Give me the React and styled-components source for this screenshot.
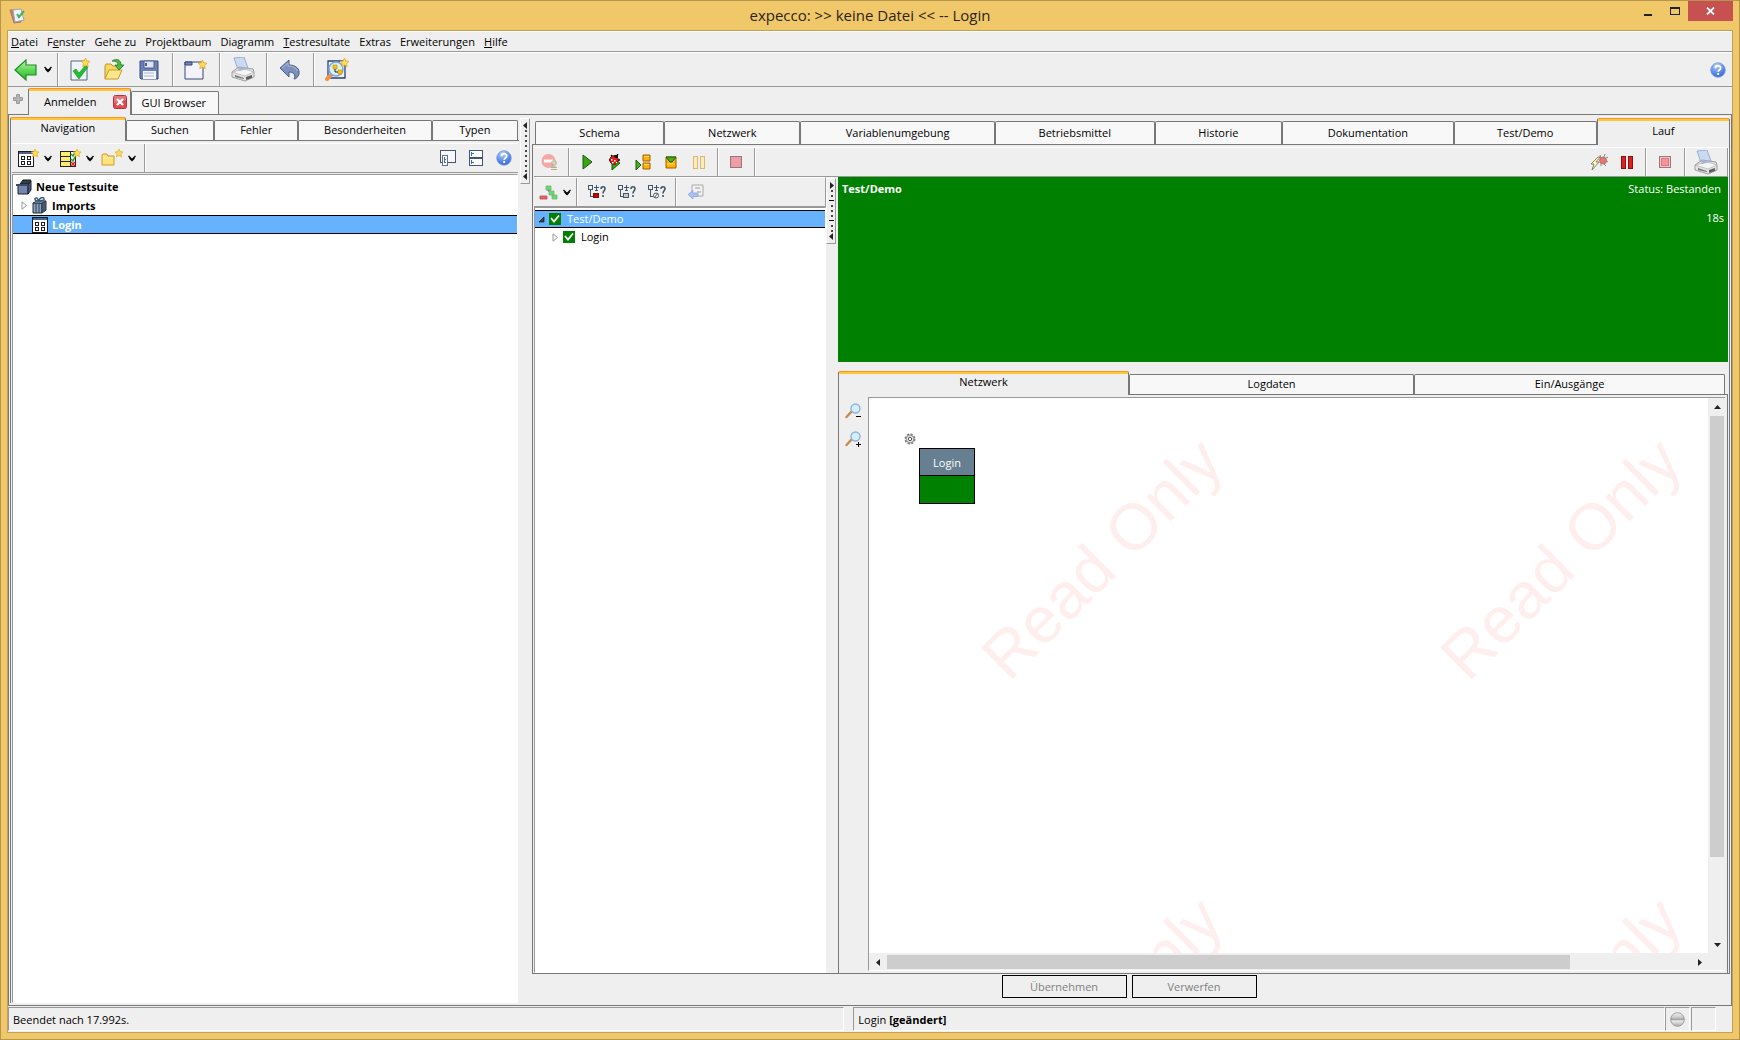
import React, { useState } from 'react';
import styled, { createGlobalStyle } from 'styled-components';

const GlobalStyle = createGlobalStyle`
  * {
    box-sizing: border-box;
  }
  body {
    margin: 0;
    color: #000;
    font-family: 'Open Sans', 'Noto Sans', sans-serif;
    font-size: 11px;
    line-height: 16px;
  }
  button {
    padding: 0;
    border: none;
    background: none;
    color: inherit;
    font: inherit;
  }
  ul {
    margin: 0;
    padding: 0;
    list-style: none;
  }
  svg {
    display: block;
    flex: none;
  }
`;

const Window = styled.div`
  display: flex;
  flex-direction: column;
  height: 100vh;
  padding: 0 6px 6px;
  border: 1px solid #b5964c;
  background: #f0c869;
`;

const TitleBar = styled.header`
  display: flex;
  align-items: center;
  height: 29px;
  flex: none;
  padding-left: 2px;
  h1 {
    flex: 1;
    margin: 0 0 2px 80px;
    font-size: 15px;
    font-weight: 400;
    line-height: 20px;
    text-align: center;
    color: #2b2417;
  }
`;

const WindowButtons = styled.div`
  display: flex;
  align-self: flex-start;
  button {
    display: flex;
    align-items: center;
    justify-content: center;
    width: 27px;
    height: 20px;
  }
  .close {
    width: 45px;
    background: #c75050;
  }
`;

const Client = styled.main`
  flex: 1;
  min-height: 0;
  display: flex;
  flex-direction: column;
  border: 1px solid #c3a057;
  background: #efefef;
`;

const MenuBar = styled.nav`
  display: flex;
  align-items: center;
  gap: 9px;
  height: 21px;
  flex: none;
  padding-left: 3px;
  border-top: 1px solid #fff;
  border-bottom: 1px solid #999;
  u {
    text-underline-offset: 1px;
  }
`;

const Toolbar = styled.div`
  display: flex;
  height: ${(p) => p.$height || 30}px;
  flex: none;
  border-top: 1px solid #fff;
  border-bottom: 1px solid #999;
`;

const ToolGroup = styled.div`
  display: flex;
  align-items: center;
  padding: 0 ${(p) => p.$pad || 3}px;
  border-right: ${(p) => (p.$last ? 'none' : '1px solid #999')};
  box-shadow: ${(p) => (p.$last ? 'none' : '1px 0 0 #fff')};
`;

const Spacer = styled.div`
  flex: 1;
`;

const ToolButton = styled.button`
  display: flex;
  align-items: center;
  justify-content: center;
  align-self: center;
  width: ${(p) => p.$width || 28}px;
  height: 26px;
`;

const TabRow = styled.div`
  display: flex;
  align-items: flex-end;
  flex: none;
  height: ${(p) => p.$height || 23}px;
  padding: ${(p) => p.$pad || '0'};
`;

const Tab = styled.button`
  position: relative;
  z-index: ${(p) => (p.$active ? 1 : 0)};
  flex: ${(p) => p.$grow || 1} 1 0;
  align-self: stretch;
  margin: ${(p) => (p.$active ? '0 0 -1px' : '3px 0 0')};
  padding-bottom: ${(p) => (p.$active ? 2 : 0) + (p.$tight ? 1 : 0)}px;
  border: 1px solid #777;
  border-bottom: none;
  border-radius: 2px 2px 0 0;
  background: #f8f8f8;
  white-space: nowrap;
  ${(p) =>
    p.$active &&
    `
    border-top-color: #ff922b;
    background: linear-gradient(#ffc636 2px, #efefef 2px);
  `}
`;

const DocTabs = styled.div`
  display: flex;
  align-items: flex-end;
  height: 27px;
  flex: none;
`;

const AddTab = styled.button`
  display: flex;
  justify-content: center;
  width: 20px;
  height: 20px;
`;

const DocTab = styled.div`
  position: relative;
  z-index: ${(p) => (p.$active ? 1 : 0)};
  display: flex;
  align-items: center;
  gap: 16px;
  height: ${(p) => (p.$active ? 27 : 23)}px;
  margin-bottom: ${(p) => (p.$active ? -1 : 0)}px;
  padding: ${(p) => (p.$active ? '0 3px 1px 15px' : '0 12px 0 10px')};
  border: 1px solid #777;
  border-bottom: none;
  border-radius: 2px 2px 0 0;
  background: #f8f8f8;
  ${(p) =>
    p.$active &&
    `
    border-top-color: #ff922b;
    background: linear-gradient(#ffc636 2px, #efefef 2px);
  `}
`;

const Workspace = styled.div`
  flex: 1;
  min-height: 0;
  display: flex;
  border: 1px solid #777;
`;

const NavPane = styled.section`
  display: flex;
  flex-direction: column;
  flex: none;
  width: 510px;
  padding: 2px 0 2px 1px;
`;

const Panel = styled.div`
  flex: 1;
  min-height: 0;
  display: flex;
  flex-direction: column;
  border: 1px solid #777;
  border-width: ${(p) => p.$edges || '1px'};
  padding: ${(p) => p.$pad || '2px 1px 0'};
`;

const Tree = styled.ul`
  flex: 1;
  margin-top: ${(p) => p.$gap || 0}px;
  padding: 2px 0;
  border: 1px solid #999;
  border-right-color: #fff;
  border-bottom-color: #fff;
  background: #fff;
  font-weight: ${(p) => (p.$bold ? 700 : 400)};
  line-height: 16px;
`;

const TreeRow = styled.li`
  display: flex;
  align-items: center;
  gap: 4px;
  height: ${(p) => p.$height}px;
  padding-left: ${(p) => p.$indent}px;
  ${(p) =>
    p.$selected &&
    `
    border-top: 1px solid #000;
    border-bottom: 1px solid #000;
    background: #66b2ff;
    color: #fff;
  `}
`;

const SplitterColumn = styled.div`
  flex: none;
  width: ${(p) => p.$width}px;
  padding: ${(p) => p.$pad};
`;

const SplitterHandle = styled.div`
  display: flex;
  flex-direction: column;
  align-items: center;
  justify-content: space-between;
  height: 66px;
  border: 1px solid #fff;
  border-right-color: #999;
  border-bottom-color: #999;
  padding: 3px 0;
`;

const RunPane = styled.section`
  flex: 1;
  min-width: 0;
  display: flex;
  flex-direction: column;
  padding: 3px 1px 0 0;
`;

const RunBody = styled.div`
  flex: 1;
  min-height: 0;
  display: flex;
`;

const TestColumn = styled.div`
  display: flex;
  flex-direction: column;
  flex: none;
  width: 292px;
  .bar {
    border-right: 1px solid #999;
  }
`;

const ResultColumn = styled.div`
  flex: 1;
  min-width: 0;
  display: flex;
  flex-direction: column;
`;

const ResultBanner = styled.div`
  display: grid;
  grid-template-columns: 1fr auto;
  align-content: start;
  row-gap: 13px;
  height: 185px;
  flex: none;
  margin-bottom: 9px;
  padding: 4px 4px 0;
  background: #008000;
  color: #fff;
  .status {
    padding-right: 3px;
  }
  .time {
    grid-column: 2;
    justify-self: end;
  }
`;

const DiagramArea = styled.div`
  flex: 1;
  min-height: 0;
  display: flex;
`;

const ZoomTools = styled.div`
  width: 29px;
  flex: none;
  button {
    height: 28px;
  }
`;

const Viewport = styled.div`
  flex: 1;
  min-width: 0;
  display: grid;
  grid-template: minmax(0, 1fr) 17px / minmax(0, 1fr) 17px;
  border-top: 1px solid #999;
  border-left: 1px solid #999;
  border-bottom: 1px solid #fff;
`;

const Canvas = styled.div`
  position: relative;
  overflow: hidden;
  background: #fff;
`;

const Watermark = styled.span`
  position: absolute;
  left: ${(p) => p.$x}px;
  top: ${(p) => p.$y}px;
  color: #ffeeee;
  font-family: 'Liberation Sans', sans-serif;
  font-size: 65px;
  line-height: 65px;
  white-space: nowrap;
  transform: rotate(-45deg);
  transform-origin: 0 55px;
`;

const StepNode = styled.div`
  position: absolute;
  left: 50px;
  top: 50px;
  width: 56px;
  border: 1px solid #000;
  background: #008000;
  .name {
    height: 27px;
    border-bottom: 1px solid #000;
    background: #668091;
    color: #fff;
    line-height: 28px;
    text-align: center;
  }
  .state {
    height: 27px;
  }
`;

const StepGear = styled.div`
  position: absolute;
  left: 35px;
  top: 35px;
`;

const ScrollBar = styled.div`
  display: flex;
  flex-direction: ${(p) => (p.$vertical ? 'column' : 'row')};
  padding: ${(p) => (p.$vertical ? '0 1px 0 2px' : '2px 0 1px')};
  button {
    display: flex;
    align-items: center;
    justify-content: center;
    flex: none;
    width: ${(p) => (p.$vertical ? 14 : 18)}px;
    height: ${(p) => (p.$vertical ? 18 : 14)}px;
  }
  .track {
    flex: 1;
  }
  .thumb {
    width: ${(p) => (p.$vertical ? '100%' : '85%')};
    height: ${(p) => (p.$vertical ? '85%' : '100%')};
    background: #cdcdcd;
  }
`;

const Actions = styled.div`
  display: flex;
  justify-content: center;
  gap: 5px;
  padding: 1px 4px 7px 0;
`;

const ActionButton = styled.button`
  width: 125px;
  height: 23px;
  border: 1px solid #000;
  &:disabled {
    color: #808080;
  }
`;

const StatusBar = styled.footer`
  display: flex;
  height: 26px;
  flex: none;
  padding: 1px 16px 1px 0;
`;

const StatusCell = styled.div`
  display: flex;
  align-items: center;
  gap: 3px;
  flex: ${(p) => p.$flex || '0 0 25px'};
  margin-right: ${(p) => p.$gap || 0}px;
  padding: 1px 4px 0;
  border: 1px solid #999;
  border-right-color: #fff;
  border-bottom-color: #fff;
`;

/* small drawings */

const Star = ({ x, y, s = 1 }) => (
  <path
    transform={`translate(${x} ${y}) scale(${s})`}
    d="M4.5 0l1.3 2.9 3.2.4-2.4 2.2.6 3.2-2.7-1.6-2.8 1.6.7-3.2L0 3.3l3.1-.4z"
    fill="#ffdc55"
    stroke="#dba520"
    strokeWidth=".7"
  />
);

const Chevron = () => (
  <svg width="8" height="7" viewBox="0 0 8 7">
    <path d="M.5 1L4 4.500 7.500 1M1.500 3L4 5.500 6.500 3" fill="none" stroke="#000" strokeWidth="1.300" />
  </svg>
);

const AppLogo = () => (
  <svg width="17" height="17" viewBox="0 0 17 17">
    <path d="M1 3l8 0 3 12-7 1z" fill="#c9806a" stroke="#a3796c" />
    <path d="M4 3l8-1 3 11-9 2z" fill="#f0f5fa" stroke="#9aa5b5" />
    <path d="M8 7l2 3 5-6" fill="none" stroke="#45b368" strokeWidth="2" />
  </svg>
);

const BackIcon = () => (
  <svg width="23" height="22" viewBox="0 0 23 22">
    <defs>
      <linearGradient id="back" x1="0" y1="0" x2="0" y2="1">
        <stop offset="0" stopColor="#c6f5b6" />
        <stop offset=".5" stopColor="#5fd957" />
        <stop offset="1" stopColor="#2fb32f" />
      </linearGradient>
    </defs>
    <path d="M1 11L12 1v5h10v10H12v5z" fill="url(#back)" stroke="#1f8a26" strokeWidth="1.2" />
  </svg>
);

const NewTestIcon = () => (
  <svg width="22" height="24" viewBox="0 0 22 24">
    <path d="M2 3h16v19H2z" fill="#eef4fa" stroke="#56697d" />
    <path d="M4 13l3-2 3 4 6-7 3 1-9 12z" fill="#1fc030" stroke="#128a1e" strokeWidth=".6" />
    <Star x={12} y={0} />
  </svg>
);

const OpenIcon = () => (
  <svg width="22" height="24" viewBox="0 0 22 24">
    <path d="M2 21V8l1-2h5l2 2h6v4" fill="#f6d765" stroke="#c09122" />
    <path d="M2 21l4-9h13l-4 9z" fill="#ffe88c" stroke="#c99a26" />
    <path d="M9 3c5-3 9-1 9 4h3l-5 5-4-5h3c0-3-2-4-6-4z" fill="#4dbb45" stroke="#227a26" strokeWidth=".8" />
  </svg>
);

const SaveIcon = () => (
  <svg width="20" height="20" viewBox="0 0 20 20">
    <path d="M1 1h18v18H2l-1-1z" fill="#6b80b4" stroke="#374a80" />
    <path d="M5 1h10v7H5z" fill="#dfe5f2" stroke="#4a5e92" />
    <path d="M6 3h2v3H6z" fill="#4a5e92" />
    <path d="M4 11h13v8H4z" fill="#f2f5fa" />
    <path d="M5 13h10M5 16h10" stroke="#aab6d2" />
  </svg>
);

const NewWindowIcon = () => (
  <svg width="24" height="22" viewBox="0 0 24 22">
    <path d="M1 3h18v17H1z" fill="#f4f2fa" stroke="#37477a" />
    <path d="M1 3h7v3H1z" fill="#7387b5" stroke="#37477a" />
    <Star x={14} y={1} />
  </svg>
);

const PrinterIcon = () => (
  <svg width="24" height="25" viewBox="0 0 24 25">
    <path d="M3 1l10-1 4 11-10 2z" fill="#cbdaf3" stroke="#8d9fc4" strokeWidth=".8" />
    <path d="M1 15l7-5 14 2 1 3v5l-9 4-13-4z" fill="#e4e4e4" stroke="#8a8a8a" strokeWidth=".8" />
    <path d="M1 15l13 4 9-4-9-3z" fill="#f6f6f6" stroke="#a5a5a5" strokeWidth=".6" />
    <path d="M4 18l9 3v1l-9-2z" fill="#777" />
    <path d="M15 20l6-2v3l-6 2z" fill="#5e5e5e" />
    <path d="M7 11l9-1 1 2-9 2z" fill="#aab8d2" />
  </svg>
);

const UndoIcon = () => (
  <svg width="22" height="22" viewBox="0 0 22 22">
    <path d="M1 9l9-8v5c7 0 11 4 10 9-1 3-3 5-5 5 2-4 0-7-5-7v5z" fill="#7d8fbd" stroke="#4c5d8c" />
    <path d="M3 9l6-5v3c5 0 8 2 9 5" fill="none" stroke="#aebbdc" />
  </svg>
);

const SearchNetIcon = () => (
  <svg width="25" height="24" viewBox="0 0 25 24">
    <path d="M3 3h17v17H3z" fill="#edf1fb" stroke="#2b3f73" strokeWidth="1.3" />
    <path d="M6 17l-4 4" stroke="#ef9446" strokeWidth="4" strokeLinecap="round" />
    <circle cx="11" cy="11" r="7" fill="#d6f1fb" stroke="#7ea6d4" strokeWidth="1.5" />
    <path d="M8 7h4v4H8zM13 12h4v4h-4z" fill="#ffc400" stroke="#c28c00" strokeWidth=".6" />
    <path d="M10 11v3h3" fill="none" stroke="#222" />
    <Star x={15} y={0} />
  </svg>
);

const HelpIcon = () => (
  <svg width="16" height="16" viewBox="0 0 16 16">
    <defs>
      <radialGradient id="help" cx=".4" cy=".2" r=".9">
        <stop offset="0" stopColor="#b4cdf8" />
        <stop offset=".6" stopColor="#5887e8" />
        <stop offset="1" stopColor="#2f5fcf" />
      </radialGradient>
    </defs>
    <circle cx="8" cy="8" r="7.3" fill="url(#help)" stroke="#7d9ddd" strokeWidth=".8" />
    <path d="M5.4 6.2c.1-3.4 5.4-3.1 5.2 0-.1 1.8-2.3 1.8-2.4 3.6M8.2 11v2" fill="none" stroke="#fff" strokeWidth="1.8" />
  </svg>
);

const CloseTabIcon = () => (
  <svg width="14" height="14" viewBox="0 0 14 14">
    <rect x=".5" y=".5" width="13" height="13" rx="2" fill="#dc4c55" stroke="#b92f3c" />
    <path d="M1 1h12v4L1 8z" fill="#ec8d92" opacity=".6" />
    <path d="M4 4l6 6M10 4l-6 6" stroke="#fff" strokeWidth="2.4" />
  </svg>
);

const SchemaIcon = ({ star }) => (
  <svg width={star ? 24 : 16} height={star ? 18 : 16} viewBox={star ? '-3 -2 24 18' : '0 0 16 16'}>
    <g shapeRendering="crispEdges">
      <path d="M.5.5h15v15H.5z" fill="#fff" stroke="#1c1c24" />
      <path d="M1 1h14v2H1z" fill="#50628c" />
      <path d="M3.5 5.5h3v3h-3zM9.5 5.5h3v3h-3zM3.5 10.5h3v3h-3zM9.5 10.5h3v3h-3z" fill="#fff" stroke="#1c1c24" />
    </g>
    {star && <Star x={13} y={-2} s={0.9} />}
  </svg>
);

const NewPlanIcon = () => (
  <svg width="24" height="18" viewBox="-3 -2 24 18">
    <g shapeRendering="crispEdges">
      <path d="M.5.5h15v15H.5z" fill="#ffec6c" stroke="#222" />
      <path d="M11 1h4v14h-4z" fill="#fff" />
      <path d="M0 5.5h11M0 10.5h11M10.5 0v15" stroke="#222" />
    </g>
    <path d="M11 3l2 2 2-4M11 8l2 2 2-4" fill="none" stroke="#1fa53a" strokeWidth="1.5" />
    <path d="M11 11l4 4m0-4l-4 4" stroke="#d22" strokeWidth="1.5" />
    <Star x={13} y={-2} s={0.9} />
  </svg>
);

const NewFolderIcon = () => (
  <svg width="24" height="18" viewBox="-3 -2 24 18">
    <path d="M0 14V4l1-1h4l1 2h6v9z" fill="#ffe27a" stroke="#cf9a2c" />
    <path d="M1 7h10" stroke="#fff3c0" />
    <Star x={13} y={-2} s={0.9} />
  </svg>
);

const PaneLeftIcon = () => (
  <svg width="16" height="16" viewBox="0 0 16 16" shapeRendering="crispEdges">
    <path d="M.5.5h15v12H.5z" fill="#f7f7fb" stroke="#45537c" />
    <path d="M2.5 5.5h5v10h-5z" fill="#fff" stroke="#6c6c86" />
    <path d="M4 7h1v6H4zM5 9h1v1H5zM5 12h1v1H5z" fill="#2a6fc4" />
  </svg>
);

const PaneSplitIcon = () => (
  <svg width="15" height="16" viewBox="0 0 15 16" shapeRendering="crispEdges">
    <path d="M.5.5h13v15H.5z" fill="#fff" stroke="#45537c" />
    <path d="M1 7h12v2H1z" fill="#45537c" />
    <path d="M2 2h1v4H2zM3 3h2v1H3zM2 10h1v4H2zM3 12h2v1H3z" fill="#2a6fc4" />
  </svg>
);

const SuiteIcon = () => (
  <svg width="16" height="16" viewBox="0 0 16 16">
    <path d="M4 5l3-4h8l-2 4z" fill="#333f43" stroke="#15191c" />
    <path d="M2 6h10v9H2z" fill="#7486b0" stroke="#1b2230" />
    <path d="M12 6l3-4v9l-3 4z" fill="#4a5878" stroke="#1b2230" />
    <path d="M0 6h12" stroke="#3c4a6a" strokeWidth="2" />
  </svg>
);

const ImportsIcon = () => (
  <svg width="16" height="17" viewBox="0 0 16 17">
    <path d="M1 6h9v10H1z" fill="#8fa3bf" stroke="#1d2a38" />
    <path d="M10 6l4-2v9l-4 3z" fill="#5c7590" stroke="#1d2a38" />
    <path d="M1 6l4-2h9l-4 2z" fill="#a9bccf" stroke="#1d2a38" strokeWidth=".8" />
    <path d="M4 6v10M7 6v10M12 5v10" stroke="#2a4358" />
    <path d="M7 4C2 5 2 0 5 1l2 3c1-5 6-4 5-1L8 4" fill="none" stroke="#34566e" strokeWidth="1.4" />
  </svg>
);

const Arrow = ({ open }) => (
  <svg width="7" height="9" viewBox="0 0 7 9">
    {open ? <path d="M6 2v5H1z" fill="#444" stroke="#111" strokeWidth=".7" /> : <path d="M1 .8L5.4 4.5 1 8.2z" fill="#fff" stroke="#999" />}
  </svg>
);

const PassedIcon = () => (
  <svg width="14" height="12" viewBox="0 0 14 12">
    <path d="M0 0h12v12H0z" fill="#008000" />
    <path d="M2 5l3 3.5 5-6" fill="none" stroke="#fff" strokeWidth="1.8" />
  </svg>
);

const BreakpointIcon = () => (
  <svg width="20" height="18" viewBox="0 0 20 18">
    <g opacity=".7">
      <circle cx="7.5" cy="8" r="7" fill="#f58a8a" />
      <path d="M3 6.5h9v3H3z" fill="#fff" />
      <path d="M13 7v7M10 10h6M10 15.5h6" stroke="#7e764c" strokeWidth="2.6" />
      <path d="M13 7v7M10 10h6M10 15.5h6" stroke="#f4eecb" strokeWidth="1" />
    </g>
  </svg>
);

const PlayIcon = () => (
  <svg width="12" height="16" viewBox="0 0 12 16">
    <path d="M2 1l9 7-9 7z" fill="#3aa514" stroke="#175c0a" />
  </svg>
);

const DebugIcon = () => (
  <svg width="14" height="17" viewBox="0 0 14 17">
    <path d="M4 4l8 5-8 7z" fill="#3aa514" stroke="#175c0a" />
    <path d="M3 1l2 2M10 0L8 3M1 6h2M10 6h2" stroke="#000" strokeWidth="1.3" />
    <circle cx="6" cy="6" r="4.3" fill="#e0201c" stroke="#4a0505" strokeWidth=".8" />
    <path d="M6 1h4v3H7z" fill="#111" />
    <path d="M3 5h1.5v1.5H3zM6 6h1.5v1.5H6zM4 8h1.5v1.5H4zM8 8h1.2v1.2H8z" fill="#fff" />
  </svg>
);

const StepIcon = () => (
  <svg width="16" height="17" viewBox="0 0 16 17">
    <path d="M8 1h7v6H8zM8 9h7v6H8z" fill="#ffb000" stroke="#a16000" />
    <path d="M9 2h5v1H9zM9 10h5v1H9z" fill="#ffd873" />
    <path d="M1 6l5 5-5 5z" fill="#45b21d" stroke="#175c0a" />
  </svg>
);

const StepOverIcon = () => (
  <svg width="12" height="13" viewBox="0 0 12 13">
    <path d="M1 1h10v11H1z" fill="#ffb000" stroke="#a16000" />
    <path d="M1 1h10L7 6H5z" fill="#45b21d" stroke="#175c0a" />
    <path d="M2 8h8" stroke="#ffe28c" />
  </svg>
);

const BarsIcon = ({ fill, stroke }) => (
  <svg width="13" height="13" viewBox="0 0 13 13" shapeRendering="crispEdges">
    <path d="M.5.5h4v12h-4zM7.5.5h4v12h-4z" fill={fill} stroke={stroke} />
  </svg>
);

const StopIcon = ({ inner }) => (
  <svg width="12" height="12" viewBox="0 0 12 12" shapeRendering="crispEdges">
    <path d="M.5.5h11v11H.5z" fill={inner ? '#f6c8ca' : '#f09ca6'} stroke="#96787c" />
    {inner && <path d="M2.5 2.5h7v7h-7z" fill="#f6949c" stroke="#d37b82" />}
  </svg>
);

const FlashBugIcon = () => (
  <svg width="19" height="17" viewBox="0 0 19 17">
    <path d="M10 1l1 3M15 0l-1 3M18 3l-2 1M18 8l-2-1M16 12l-2-2M11 12v-2" stroke="#888" fill="none" />
    <circle cx="13" cy="6.5" r="3.5" fill="#ee7474" stroke="#a06a6a" strokeWidth=".8" />
    <path d="M8 3L1 10h3l-2 6 7-8H6l4-5z" fill="#fffbb0" stroke="#77776a" strokeWidth=".9" />
  </svg>
);

const TestTreeIcon = () => (
  <svg width="20" height="15" viewBox="0 0 20 15">
    <path d="M9 3v3h3M14 8v3" stroke="#555" fill="none" />
    <path d="M7 1h5v4H7zM10 6h5v4h-5zM13 10h5v4h-5z" fill="#5ee06b" stroke="#7aa37c" strokeWidth=".7" />
    <path d="M1 11h7v3H1z" fill="#f25f6b" stroke="#b34b55" strokeWidth=".8" />
  </svg>
);

const FindStateIcon = ({ kind }) => (
  <svg width="19" height="14" viewBox="0 0 19 14">
    <g shapeRendering="crispEdges" fill="none" stroke="#3f5768">
      <path d="M1.5.5h4v4h-4zM3.5 5v6H6M7 2.5h5M9.5 0v6M8 5.5h3" />
      {kind === 'failed' && <path d="M6.5 8.5h5v4h-5z" fill="#c80000" stroke="#7c1010" />}
      {kind === 'open' && <path d="M6.5 8.5h5v4h-5z" fill="#c4c9d0" />}
    </g>
    {kind === 'skipped' && (
      <g fill="#fff" stroke="#3f5768">
        <circle cx="9" cy="10.5" r="2.5" />
        <path d="M7 13l4-5" />
      </g>
    )}
    <path d="M14 4c0-3 4-3 4-.5C18 6 16 5.5 16 8.5M16 10v2" fill="none" stroke="#3f5768" strokeWidth="1.6" />
  </svg>
);

const GotoIcon = () => (
  <svg width="18" height="16" viewBox="0 0 18 16">
    <path d="M5 1h11v11H5z" fill="#f2f2f2" stroke="#a9a9a9" />
    <path d="M8 3h5v2H8zM10 7h4v2h-4z" fill="#c6c6c6" />
    <path d="M1 10.5l5-4V9h5v3.5H6V15z" fill="#a8c0f2" stroke="#86a2de" strokeWidth=".7" />
  </svg>
);

const ZoomIcon = ({ plus }) => (
  <svg width="17" height="17" viewBox="0 0 17 17">
    <path d="M7 8L1.5 14" stroke="#c98a4c" strokeWidth="2.4" strokeLinecap="round" />
    <circle cx="10.5" cy="5.5" r="4.5" fill="#d5eefb" stroke="#8fb4da" strokeWidth="1.4" />
    <g shapeRendering="crispEdges" stroke="#000">
      <path d="M11 13.5h5" />
      {plus && <path d="M13.5 11v5" />}
    </g>
  </svg>
);

const GearIcon = () => (
  <svg width="12" height="12" viewBox="0 0 12 12">
    <circle cx="6" cy="6" r="4.8" fill="#f0f0f0" stroke="#777" strokeWidth="1.4" strokeDasharray="2.2 1.57" />
    <circle cx="6" cy="6" r="3.9" fill="#e6e6e6" stroke="#777" strokeWidth=".8" />
    <circle cx="6" cy="6" r="1.7" fill="#fff" stroke="#555" />
  </svg>
);

const OrbIcon = () => (
  <svg width="15" height="15" viewBox="0 0 15 15">
    <defs>
      <linearGradient id="orb" x1="0" y1="0" x2="0" y2="1">
        <stop offset="0" stopColor="#f4f4f4" />
        <stop offset=".35" stopColor="#c8c8c8" />
        <stop offset=".5" stopColor="#a4a4a4" />
        <stop offset=".6" stopColor="#ececec" />
        <stop offset="1" stopColor="#a8a8a8" />
      </linearGradient>
    </defs>
    <circle cx="7.5" cy="7.5" r="6.8" fill="url(#orb)" stroke="#8c8c8c" strokeWidth=".8" />
  </svg>
);

const SmallArrow = ({ dir }) => {
  const shapes = {
    up: 'M0 5h7L3.5 1z',
    down: 'M0 2h7L3.5 6z',
    left: 'M5 0v7L1 3.5z',
    right: 'M2 0v7l4-3.5z',
  };
  return (
    <svg width="7" height="7" viewBox="0 0 7 7">
      <path d={shapes[dir]} fill="#222" />
    </svg>
  );
};

const Splitter = ({ top, dashes = [] }) => (
  <SplitterHandle>
    <SmallArrow dir={top} />
    <svg width="5" height="42" viewBox="0 0 5 42" shapeRendering="crispEdges">
      {[0, 5, 10, 15, 20, 25, 30, 35, 40].map((y, i) =>
        dashes.includes(i) ? (
          <rect key={y} x="0" y={y} width="5" height="1" fill="#000" />
        ) : (
          <rect key={y} x="2" y={y} width="2" height="2" fill="#444" />
        )
      )}
    </svg>
    <SmallArrow dir="left" />
  </SplitterHandle>
);

const menus = [
  ['', 'D', 'atei'],
  ['F', 'e', 'nster'],
  ['Gehe zu'],
  ['Projektbaum'],
  ['Diagramm'],
  ['', 'T', 'estresultate'],
  ['Extras'],
  ['Erweiterungen'],
  ['', 'H', 'ilfe'],
];

const navTabs = [
  ['Navigation', 116],
  ['Suchen', 88],
  ['Fehler', 84],
  ['Besonderheiten', 134],
  ['Typen', 86],
];

const runTabs = [
  ['Schema', 129],
  ['Netzwerk', 136],
  ['Variablenumgebung', 195],
  ['Betriebsmittel', 160],
  ['Historie', 127],
  ['Dokumentation', 172],
  ['Test/Demo', 143],
  ['Lauf', 133],
];

const detailTabs = [
  ['Netzwerk', 291],
  ['Logdaten', 285],
  ['Ein/Ausgänge', 311],
];

const marks = [
  [140, 230],
  [599, 230],
  [140, 689],
  [599, 689],
];

const Tabs = ({ items, start, height, pad }) => {
  const [active, setActive] = useState(start);
  return (
    <TabRow $height={height} $pad={pad} role="tablist">
      {items.map(([label, grow]) => (
        <Tab
          key={label}
          role="tab"
          aria-selected={label === active}
          $active={label === active}
          $tight={!height}
          $grow={grow}
          onClick={() => setActive(label)}
        >
          {label}
        </Tab>
      ))}
    </TabRow>
  );
};

const Tool = ({ label, width, children }) => (
  <ToolButton aria-label={label} $width={width}>
    {children}
  </ToolButton>
);

const App = () => {
  return (
    <>
      <GlobalStyle />
      <Window>
        <TitleBar>
          <AppLogo />
          <h1>expecco: &gt;&gt; keine Datei &lt;&lt; -- Login</h1>
          <WindowButtons>
            <button aria-label="Minimieren">
              <svg width="9" height="14" viewBox="0 0 9 14" shapeRendering="crispEdges">
                <path d="M1 10h8v2H1z" fill="#222" />
              </svg>
            </button>
            <button aria-label="Maximieren">
              <svg width="11" height="10" viewBox="0 0 11 10" shapeRendering="crispEdges">
                <path d="M1 1h10v8H1zM2 3v5h8V3z" fill="#222" fillRule="evenodd" />
              </svg>
            </button>
            <button className="close" aria-label="Schließen">
              <svg width="9" height="8" viewBox="0 0 9 8">
                <path d="M1 .5l7 7M8 .5l-7 7" stroke="#fff" strokeWidth="1.8" />
              </svg>
            </button>
          </WindowButtons>
        </TitleBar>
        <Client>
          <MenuBar>
            {menus.map(([before, key, after]) => (
              <button key={before + after}>
                {before}
                {key && <u>{key}</u>}
                {after}
              </button>
            ))}
          </MenuBar>
          <Toolbar $height={35}>
            <ToolGroup $pad={2}>
              <Tool label="Zurück" width={31}>
                <BackIcon />
              </Tool>
              <Tool label="Verlauf" width={14}>
                <Chevron />
              </Tool>
            </ToolGroup>
            <ToolGroup $pad={5}>
              <Tool label="Neu" width={34}>
                <NewTestIcon />
              </Tool>
              <Tool label="Öffnen" width={34}>
                <OpenIcon />
              </Tool>
              <Tool label="Speichern" width={36}>
                <SaveIcon />
              </Tool>
            </ToolGroup>
            <ToolGroup $pad={6}>
              <Tool label="Neues Fenster" width={34}>
                <NewWindowIcon />
              </Tool>
            </ToolGroup>
            <ToolGroup $pad={6}>
              <Tool label="Drucken" width={34}>
                <PrinterIcon />
              </Tool>
            </ToolGroup>
            <ToolGroup $pad={6}>
              <Tool label="Rückgängig" width={34}>
                <UndoIcon />
              </Tool>
            </ToolGroup>
            <ToolGroup $pad={6} $last>
              <Tool label="Suchen" width={34}>
                <SearchNetIcon />
              </Tool>
            </ToolGroup>
            <Spacer />
            <Tool label="Hilfe">
              <HelpIcon />
            </Tool>
          </Toolbar>
          <DocTabs>
            <AddTab aria-label="Neuer Tab">
              <svg width="10" height="10" viewBox="0 0 10 10">
                <path d="M3.5.5h3v3h3v3h-3v3h-3v-3h-3v-3h3z" fill="#b4b4b4" stroke="#9a9a9a" />
              </svg>
            </AddTab>
            <DocTab $active>
              Anmelden
              <button aria-label="Tab schließen">
                <CloseTabIcon />
              </button>
            </DocTab>
            <DocTab>GUI Browser</DocTab>
          </DocTabs>
          <Workspace>
            <NavPane>
              <Tabs items={navTabs} start="Navigation" pad="0 1px 0 0" />
              <Panel $edges="1px 0 0 1px">
                <Toolbar>
                  <ToolGroup $pad={3}>
                    <Tool label="Neuer Baustein" width={24}>
                      <SchemaIcon star />
                    </Tool>
                    <Tool label="Baustein-Optionen" width={18}>
                      <Chevron />
                    </Tool>
                    <Tool label="Neuer Testplan" width={24}>
                      <NewPlanIcon />
                    </Tool>
                    <Tool label="Testplan-Optionen" width={18}>
                      <Chevron />
                    </Tool>
                    <Tool label="Neuer Ordner" width={24}>
                      <NewFolderIcon />
                    </Tool>
                    <Tool label="Ordner-Optionen" width={18}>
                      <Chevron />
                    </Tool>
                  </ToolGroup>
                  <Spacer />
                  <Tool label="Baum links">
                    <PaneLeftIcon />
                  </Tool>
                  <Tool label="Baum geteilt">
                    <PaneSplitIcon />
                  </Tool>
                  <Tool label="Hilfe">
                    <HelpIcon />
                  </Tool>
                </Toolbar>
                <Tree $gap={1} $bold>
                  <TreeRow $height={19} $indent={3}>
                    <SuiteIcon />
                    Neue Testsuite
                  </TreeRow>
                  <TreeRow $height={19} $indent={8}>
                    <Arrow />
                    <ImportsIcon />
                    Imports
                  </TreeRow>
                  <TreeRow $height={19} $indent={19} $selected>
                    <SchemaIcon />
                    Login
                  </TreeRow>
                </Tree>
              </Panel>
            </NavPane>
            <SplitterColumn $width={13} $pad="3px 2px 0 1px">
              <Splitter top="left" />
            </SplitterColumn>
            <RunPane>
              <Tabs items={runTabs} start="Lauf" height={26} pad="0 0 0 3px" />
              <Panel>
                <Toolbar>
                  <ToolGroup $pad={3}>
                    <Tool label="Haltepunkte entfernen">
                      <BreakpointIcon />
                    </Tool>
                  </ToolGroup>
                  <ToolGroup $pad={4}>
                    <Tool label="Start">
                      <PlayIcon />
                    </Tool>
                    <Tool label="Debuggen">
                      <DebugIcon />
                    </Tool>
                    <Tool label="Einzelschritt">
                      <StepIcon />
                    </Tool>
                    <Tool label="Schritt über">
                      <StepOverIcon />
                    </Tool>
                    <Tool label="Pause">
                      <BarsIcon fill="#fbedb8" stroke="#d9b77c" />
                    </Tool>
                  </ToolGroup>
                  <ToolGroup $pad={4}>
                    <Tool label="Stopp">
                      <StopIcon />
                    </Tool>
                  </ToolGroup>
                  <Spacer />
                  <ToolGroup $pad={4}>
                    <Tool label="Bei Fehler anhalten">
                      <FlashBugIcon />
                    </Tool>
                    <Tool label="Anhalten">
                      <BarsIcon fill="#dc2323" stroke="#8e1111" />
                    </Tool>
                  </ToolGroup>
                  <ToolGroup $pad={5}>
                    <Tool label="Abbrechen">
                      <StopIcon inner />
                    </Tool>
                  </ToolGroup>
                  <ToolGroup $pad={3}>
                    <Tool label="Protokoll drucken" width={36}>
                      <PrinterIcon />
                    </Tool>
                  </ToolGroup>
                </Toolbar>
                <RunBody>
                  <TestColumn>
                    <Toolbar className="bar">
                      <ToolGroup $pad={3}>
                        <Tool label="Testbaum" width={24}>
                          <TestTreeIcon />
                        </Tool>
                        <Tool label="Testbaum-Optionen" width={12}>
                          <Chevron />
                        </Tool>
                      </ToolGroup>
                      <ToolGroup $pad={4}>
                        <Tool label="Nächster Fehler" width={30}>
                          <FindStateIcon kind="failed" />
                        </Tool>
                        <Tool label="Nächster offener" width={30}>
                          <FindStateIcon kind="open" />
                        </Tool>
                        <Tool label="Nächster übersprungener" width={30}>
                          <FindStateIcon kind="skipped" />
                        </Tool>
                      </ToolGroup>
                      <ToolGroup $pad={6} $last>
                        <Tool label="Gehe zu">
                          <GotoIcon />
                        </Tool>
                      </ToolGroup>
                    </Toolbar>
                    <Tree>
                      <TreeRow $height={18} $indent={3} $selected>
                        <Arrow open />
                        <PassedIcon />
                        Test/Demo
                      </TreeRow>
                      <TreeRow $height={18} $indent={17}>
                        <Arrow />
                        <PassedIcon />
                        Login
                      </TreeRow>
                    </Tree>
                  </TestColumn>
                  <SplitterColumn $width={12} $pad="1px 2px 0 0">
                    <Splitter top="right" dashes={[2, 6]} />
                  </SplitterColumn>
                  <ResultColumn>
                    <ResultBanner>
                      <strong>Test/Demo</strong>
                      <span className="status">Status: Bestanden</span>
                      <span className="time">18s</span>
                    </ResultBanner>
                    <Tabs items={detailTabs} start="Netzwerk" pad="0 3px 0 0" />
                    <Panel $edges="1px 1px 0 1px" $pad="2px 2px 2px 0">
                      <DiagramArea>
                        <ZoomTools>
                          <Tool label="Verkleinern">
                            <ZoomIcon />
                          </Tool>
                          <Tool label="Vergrößern">
                            <ZoomIcon plus />
                          </Tool>
                        </ZoomTools>
                        <Viewport>
                          <Canvas>
                            {marks.map(([x, y]) => (
                              <Watermark key={`${x}-${y}`} $x={x} $y={y}>
                                Read Only
                              </Watermark>
                            ))}
                            <StepGear>
                              <GearIcon />
                            </StepGear>
                            <StepNode>
                              <div className="name">Login</div>
                              <div className="state" />
                            </StepNode>
                          </Canvas>
                          <ScrollBar $vertical>
                            <button aria-label="Nach oben">
                              <SmallArrow dir="up" />
                            </button>
                            <div className="track">
                              <div className="thumb" />
                            </div>
                            <button aria-label="Nach unten">
                              <SmallArrow dir="down" />
                            </button>
                          </ScrollBar>
                          <ScrollBar>
                            <button aria-label="Nach links">
                              <SmallArrow dir="left" />
                            </button>
                            <div className="track">
                              <div className="thumb" />
                            </div>
                            <button aria-label="Nach rechts">
                              <SmallArrow dir="right" />
                            </button>
                          </ScrollBar>
                        </Viewport>
                      </DiagramArea>
                    </Panel>
                  </ResultColumn>
                </RunBody>
              </Panel>
              <Actions>
                <ActionButton disabled>Übernehmen</ActionButton>
                <ActionButton disabled>Verwerfen</ActionButton>
              </Actions>
            </RunPane>
          </Workspace>
          <StatusBar>
            <StatusCell $flex="836 1 0" $gap={9}>
              Beendet nach 17.992s.
            </StatusCell>
            <StatusCell $flex="811 1 0">
              Login <strong>[geändert]</strong>
            </StatusCell>
            <StatusCell $gap={1}>
              <OrbIcon />
            </StatusCell>
            <StatusCell />
          </StatusBar>
        </Client>
      </Window>
    </>
  );
};

export default App;
